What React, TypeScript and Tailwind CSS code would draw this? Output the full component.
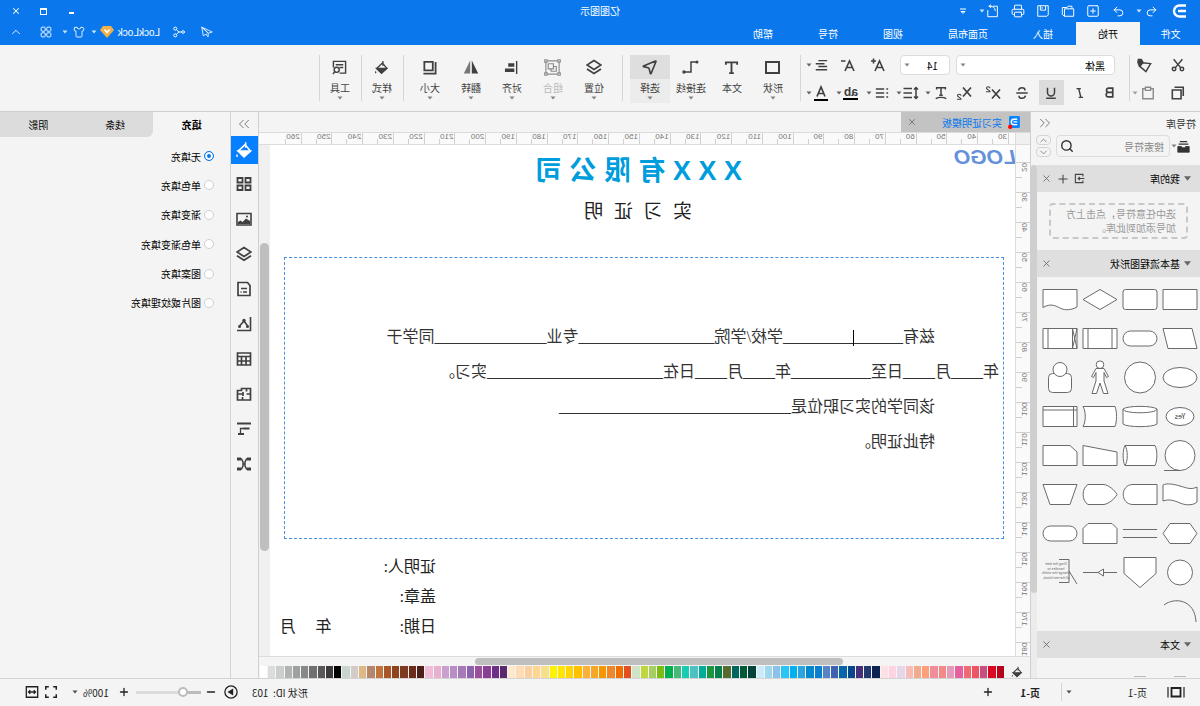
import React from "react";
import {
  ChevronDown,
  ChevronUp,
  ChevronsLeft,
  ChevronsRight,
  Minus,
  MousePointer2,
  Plus,
  Printer,
  Redo2,
  Search,
  Shirt,
  SquarePlus,
  Undo2,
  X,
} from "lucide-react";

type SvgProps = { className?: string; box?: string; width?: number; children: React.ReactNode };

function Svg({ className = "size-4", box = "0 0 16 16", width = 1.5, children }: SvgProps) {
  return (
    <svg className={className} viewBox={box} fill="none" stroke="currentColor" strokeWidth={width} aria-hidden="true">
      {children}
    </svg>
  );
}

function Caret({ className = "" }: { className?: string }) {
  return (
    <svg className={"h-1 w-1.5 shrink-0 opacity-80 " + className} viewBox="0 0 6 4" fill="currentColor" aria-hidden="true">
      <path d="M0.5 0.5h5L3 3.5z" />
    </svg>
  );
}

function Bucket({ className = "size-4" }: { className?: string }) {
  return (
    <Svg className={className} width={1.4}>
      <path d="M6.500 1v5M7 3.200 13.200 9 8 14 2.300 9z" />
      <path d="M2.500 9h10.700L8 14z" fill="currentColor" />
      <path d="M14.200 11.500c1 1.400 1 2.400 0 2.800-1-.4-1-1.400 0-2.800z" fill="currentColor" stroke="none" />
    </Svg>
  );
}

function IconButton({ label, className = "w-4", children }: { label: string; className?: string; children: React.ReactNode }) {
  return (
    <button type="button" aria-label={label} className={"flex shrink-0 items-center justify-center " + className}>
      {children}
    </button>
  );
}

function TitleBar() {
  return (
    <div className="grid h-[22px] grid-cols-[1fr_auto_1fr] items-center">
      <div className="flex h-full items-center pl-2">
        <svg className="h-[14px] w-6" viewBox="0 0 24 14" fill="none" stroke="white" strokeWidth="2.4" aria-hidden="true">
          <path d="M18 1.500" />
          <path d="M6 1.500h6.500a5.500 5.500 0 0 1 0 11H6M6 7h8" />
        </svg>
        <IconButton label="撤销" className="ml-[6px] w-5">
          <Undo2 className="size-[13px]" strokeWidth={1.8} />
        </IconButton>
        <Caret />
        <IconButton label="恢复" className="ml-[5px] w-[25px]">
          <Redo2 className="size-[13px]" strokeWidth={1.8} />
        </IconButton>
        <IconButton label="新建" className="w-[25px]">
          <SquarePlus className="size-[14px]" strokeWidth={1.7} />
        </IconButton>
        <IconButton label="打开" className="w-[25px]">
          <Svg className="size-[14px]" width={1.1}>
            <path d="M1.500 5.500h10.500V14H1.500zM3.500 5.500V2.500h4.500l1 1.500h5.500v8L12 14" />
          </Svg>
        </IconButton>
        <IconButton label="保存" className="w-[25px]">
          <Svg className="size-[14px]" width={1.1}>
            <path d="M2 2h12v12H3.500L2 12.500zM5 2v5h6V2M9 3.500v2" />
          </Svg>
        </IconButton>
        <IconButton label="打印" className="w-[25px]">
          <Printer className="size-[14px]" strokeWidth={1.7} />
        </IconButton>
        <IconButton label="导出" className="w-[25px]">
          <Svg className="size-[14px]" width={1.1}>
            <path d="M8 2.500H3v12h11V7M9.500 2.500H13M5.500 8c0-3.500 2-5.500 6.500-5.500M10.500 1l2 1.500-2 2" />
          </Svg>
        </IconButton>
        <Caret className="-ml-1" />
        <IconButton label="更多" className="ml-[10px] w-3">
          <Svg className="h-[7px] w-2" box="0 0 8 7" width={1}>
            <path d="M1 1h6M2 3.500h4L4 5.500z" />
          </Svg>
        </IconButton>
      </div>
      <h1 className="text-[10px] leading-[22px]">亿图图示</h1>
      <div className="flex justify-end pr-0.5">
        <IconButton label="最小化" className="w-7">
          <span className="mt-1 h-0.5 w-[5px] bg-white" />
        </IconButton>
        <IconButton label="最大化" className="w-7">
          <span className="size-[7px] border border-t-2 border-white" />
        </IconButton>
        <IconButton label="关闭" className="w-7">
          <X className="size-[10px]" strokeWidth={2.5} />
        </IconButton>
      </div>
    </div>
  );
}

function MenuBar() {
  const rest = ["插入", "页面布局", "视图", "符号", "帮助"];
  return (
    <div className="flex h-[23px] justify-between text-[10px]">
      <nav className="flex gap-px">
        <button type="button" className="w-[59px]">文件</button>
        <button type="button" className="bg-[#f4f4f4] px-[22px] text-black">开始</button>
        {rest.map((name) => (
          <button key={name} type="button" className="px-[22px]">{name}</button>
        ))}
      </nav>
      <div className="flex items-center pr-0.5 pb-[3px]">
        <IconButton label="发送">
          <Svg className="size-3" width={1.1}>
            <path d="M15 1.500 1 8l5 1.500zM15 1.500 13 13l-4.500-2.500M15 1.500 6.500 9.500v5L9.500 11" />
          </Svg>
        </IconButton>
        <IconButton label="分享" className="ml-3 w-4">
          <Svg className="size-3" width={1.3}>
            <circle cx="2.500" cy="8" r="1.800" />
            <circle cx="13" cy="3.500" r="2" />
            <circle cx="13" cy="12.500" r="2" />
            <path d="M4.300 8H8l3.300-3M8 8l3.300 3" />
          </Svg>
        </IconButton>
        <button type="button" className="ml-[11px] flex items-center">
          <span className="w-[46px] text-left font-['Liberation_Sans','Noto_Sans_CJK_SC',sans-serif] text-[10px]">LockLock</span>
          <svg className="h-3 w-[14px]" viewBox="0 0 14 12" aria-hidden="true">
            <path d="M3 0h8l3 4-7 8-7-8z" fill="#f3b04a" />
            <path d="M4.500 3.500 7 6.500l2.500-3" fill="none" stroke="white" strokeWidth="1.500" />
          </svg>
          <Caret className="ml-[3px]" />
        </button>
        <IconButton label="主题" className="ml-1 w-4">
          <Shirt className="size-3" strokeWidth={1.7} />
        </IconButton>
        <Caret className="ml-[3px]" />
        <IconButton label="应用" className="ml-1 w-6">
          <Svg className="size-3" width={1.2}>
            <rect x="1.500" y="1.500" width="5.500" height="5.500" rx="1.500" />
            <rect x="9" y="1.500" width="5.500" height="5.500" rx="1.500" />
            <rect x="1.500" y="9" width="5.500" height="5.500" rx="1.500" />
            <rect x="9" y="9" width="5.500" height="5.500" rx="1.500" />
          </Svg>
        </IconButton>
        <IconButton label="收起" className="ml-1 w-7">
          <ChevronUp className="size-[14px]" strokeWidth={1.5} />
        </IconButton>
      </div>
    </div>
  );
}

function Divider({ className = "" }: { className?: string }) {
  return <div className={"h-[46px] w-px shrink-0 bg-[#d6d6d6] " + className} />;
}

function BigTool({ label, active, muted, caret = true, children }: { label: string; active?: boolean; muted?: boolean; caret?: boolean; children: React.ReactNode }) {
  return (
    <button
      type="button"
      disabled={muted}
      className={
        "flex h-12 w-10 shrink-0 flex-col items-center text-[10px] " +
        (active ? "bg-[#ececec] " : "") +
        (muted ? "text-[#b8b8b8]" : "text-[#404040]")
      }
    >
      <span className={"flex h-6 w-full items-center justify-center " + (active ? "bg-[#dedede]" : "")}>{children}</span>
      <span className="h-[17px] leading-[18px]">{label}</span>
      {caret && <Caret className="text-[#666]" />}
    </button>
  );
}

function Ribbon() {
  return (
    <div className="flex h-[67px] items-start border-b border-[#cfcfcf] bg-[#f4f4f4] pt-[10px] text-[#404040]">
      <div className="w-[70px] shrink-0 pl-[14px]">
        <div className="flex h-5 items-center">
          <IconButton label="剪切">
            <Svg className="size-[14px]" width={1.7}>
              <path d="M3 1.500 11 11M13 1.500 5 11" />
              <circle cx="3.500" cy="12.500" r="2" />
              <circle cx="12.500" cy="12.500" r="2" />
            </Svg>
          </IconButton>
          <IconButton label="格式刷" className="ml-[17px] w-4">
            <Svg className="size-[15px]" width={1.6}>
              <path d="M1.500 6 10 5l3 4-6.500 5.500z" />
              <path d="m10 4 3.500 4.500 1.500-4-.5-3h-3z" fill="currentColor" />
            </Svg>
          </IconButton>
        </div>
        <div className="mt-[6px] flex h-6 items-center">
          <IconButton label="复制">
            <Svg className="size-[14px]" width={1.8}>
              <path d="M4.500 4.500h10v10h-10zM2 11.500v-10h10" />
            </Svg>
          </IconButton>
          <IconButton label="粘贴" className="ml-[14px] w-4 text-[#8a8a8a]">
            <Svg className="size-[14px]" width={1.6}>
              <path d="M5 3H2v11.500h12V3h-3M5 1.500h6v3.500H5z" />
            </Svg>
          </IconButton>
          <Caret className="ml-0.5 text-[#888]" />
        </div>
      </div>
      <Divider />
      <div className="w-[328px] shrink-0 pl-[14px]">
        <div className="flex h-5 items-center">
          <div className="relative flex">
            <select aria-label="字体" defaultValue="黑体" className="h-5 w-[159px] appearance-none rounded-sm border border-[#dcdcdc] bg-white pl-[9px] text-[10px] text-black">
              <option>黑体</option>
            </select>
            <Caret className="absolute top-2 right-1 text-[#666]" />
          </div>
          <div className="relative ml-[6px] flex">
            <select aria-label="字号" defaultValue="14" className="h-5 w-[50px] appearance-none rounded-sm border border-[#dcdcdc] bg-white pl-[11px] text-[10px] text-black">
              <option>14</option>
            </select>
            <Caret className="absolute top-2 right-1 text-[#666]" />
          </div>
          <IconButton label="增大字号" className="ml-3 w-5">
            <Svg width={1.6}>
              <path d="M2 14 6.500 4 11 14M3.500 10.500h6M10 4h5M12.500 1.500v5" />
            </Svg>
          </IconButton>
          <IconButton label="减小字号" className="ml-[10px] w-5">
            <Svg width={1.6}>
              <path d="M2 14 6.500 4 11 14M3.500 10.500h6M10.500 4h4.500" />
            </Svg>
          </IconButton>
          <IconButton label="对齐方式" className="ml-[9px] w-4">
            <Svg className="size-[14px]" width={1.7}>
              <path d="M1 3h10M4 6.500h10M1 9.800h10M1 13.300h13" />
            </Svg>
          </IconButton>
          <Caret className="ml-px" />
        </div>
        <div className="mt-[5px] -ml-[7px] flex h-[25px] items-center">
          <div className="flex gap-1">
            <IconButton label="加粗" className="h-[25px] w-[25px]">
              <Svg className="size-[13px]" width={2.1}>
                <path d="M4 2.500h5a2.600 2.600 0 0 1 0 5.300H4zM4 7.800h5.800a2.900 2.900 0 0 1 0 5.700H4z" />
              </Svg>
            </IconButton>
            <IconButton label="斜体" className="h-[25px] w-[25px]">
              <Svg className="size-[14px]" width={1.7}>
                <path d="M7 3h5M9.500 3 7 13M4.500 13h5" />
              </Svg>
            </IconButton>
            <IconButton label="下划线" className="h-[25px] w-[25px] bg-[#dcdcdc]">
              <Svg className="size-[14px]" width={1.7}>
                <path d="M4 2v5.500a4 4 0 0 0 8 0V2M2.500 14h11" />
              </Svg>
            </IconButton>
            <IconButton label="删除线" className="h-[25px] w-[25px]">
              <Svg className="size-[14px]" width={1.7}>
                <path d="M12 5c-.5-2-2-3-4-3S4.500 3.200 4.500 5M4 11c.5 2 2 3 4 3s3.500-1.200 3.500-3M1.500 8h13" />
              </Svg>
            </IconButton>
            <IconButton label="上标" className="h-[25px] w-[25px]">
              <Svg width={1.7}>
                <path d="M1 4.500 9 13.500M9 4.500 1 13.500" />
                <path d="M11 3.200c0-2 3.500-2 3.500 0 0 1.200-3.500 1.800-3.500 3.500h4" strokeWidth="1.100" />
              </Svg>
            </IconButton>
            <IconButton label="下标" className="h-[25px] w-[25px]">
              <Svg width={1.7}>
                <path d="M1 2.500 9 11.500M9 2.500 1 11.500" />
                <path d="M11 10.700c0-2 3.500-2 3.500 0 0 1.200-3.500 1.800-3.500 3.500h4" strokeWidth="1.100" />
              </Svg>
            </IconButton>
          </div>
          <IconButton label="文本变形" className="ml-[3px] w-4">
            <Svg className="size-[14px]" width={1.7}>
              <path d="M3 4V2h10v2M8 2v8.500M6 10.500h4M2 14.500c3-2 9-2 12 0" />
            </Svg>
          </IconButton>
          <Caret className="ml-0.5" />
          <IconButton label="行距" className="ml-[6px] w-4">
            <Svg width={1.5}>
              <path d="M3 2.500v11M1 4.500l2-2 2 2M1 11.500l2 2 2-2M7 3.500h8.500M7 8h8.500M7 12.500h8.500" />
            </Svg>
          </IconButton>
          <Caret className="ml-px" />
          <IconButton label="项目符号" className="ml-[6px] w-4">
            <Svg className="size-[14px]" width={1.6}>
              <path d="M1 3.500h2M1 8h2M1 12.500h2M5.500 3.500H15M5.500 8H15M5.500 12.500H15" />
            </Svg>
          </IconButton>
          <Caret className="ml-0.5" />
          <IconButton label="突出显示" className="ml-[7px] w-4">
            <span className="flex h-[15px] w-[15px] items-center justify-center border-b-2 border-black font-['Liberation_Sans',sans-serif] text-[12px] leading-3 font-bold">ab</span>
          </IconButton>
          <Caret className="ml-px" />
          <IconButton label="字体颜色" className="ml-[7px] w-4">
            <Svg width={1.7}>
              <path d="M4 11.500 8 2l4 9.500M5.200 8.500h5.600" />
              <path d="M1 15h14" stroke="black" strokeWidth="2" />
            </Svg>
          </IconButton>
          <Caret className="ml-px" />
        </div>
      </div>
      <Divider />
      <div className="flex gap-px pl-[7px]">
        <BigTool label="形状">
          <span className="h-[13px] w-[15px] border-2 border-[#404040]" />
        </BigTool>
        <BigTool label="文本" caret={false}>
          <Svg className="size-[15px]" width={2}>
            <path d="M2 5V2.500h12V5M8 2.500V14M5.500 14h5" />
          </Svg>
        </BigTool>
        <BigTool label="连接线">
          <Svg className="h-4 w-[17px]" box="0 0 17 16" width={1.5}>
            <path d="M2.500 3H8v10h6" />
            <circle cx="2" cy="3" r="1.500" fill="currentColor" stroke="none" />
            <circle cx="15" cy="13" r="1.700" fill="currentColor" stroke="none" />
          </Svg>
        </BigTool>
        <BigTool label="选择" active>
          <MousePointer2 className="size-[18px]" strokeWidth={2.2} />
        </BigTool>
      </div>
      <Divider className="mr-[8px] ml-[7px]" />
      <div className="flex gap-px">
        <BigTool label="位置">
          <Svg width={1.6}>
            <path d="M8 1.500 15 6l-7 4.500L1 6zM1 10l7 4.500L15 10" />
          </Svg>
        </BigTool>
        <BigTool label="组合" muted>
          <Svg className="size-[17px] text-[#8a8a8a]" box="0 0 18 18" width={1.2}>
            <path d="M2 2h14v14H2zM8 5h5.500v5.500H8zM8 8H5v5h5.500v-2.500" />
            <path d="M.8.8h2.500v2.500H.8zM14.700.8h2.500v2.500h-2.500zM.8 14.700h2.500v2.500H.8zM14.700 14.700h2.500v2.500h-2.500z" fill="#f4f4f4" />
          </Svg>
        </BigTool>
        <BigTool label="对齐">
          <Svg className="size-[15px]" width={1.5}>
            <path d="M2.500 1v14" />
            <path d="M5 3.500h6.500v3.800H5zM5 9h10v3.800H5z" fill="currentColor" stroke="none" />
          </Svg>
        </BigTool>
        <BigTool label="翻转">
          <Svg width={0}>
            <path d="M7.200 1.500V14.500H.8z" fill="currentColor" />
            <path d="M8.800 1.500V14.500h6.400z" fill="#777" />
          </Svg>
        </BigTool>
        <BigTool label="大小">
          <Svg className="size-[15px]" width={1.9}>
            <path d="M4.500 2h9v9h-9zM1.500 2v12.500h13" />
          </Svg>
        </BigTool>
      </div>
      <Divider className="mr-px ml-[6px]" />
      <BigTool label="样式">
        <Bucket className="size-[15px]" />
      </BigTool>
      <Divider className="mr-px" />
      <BigTool label="工具">
        <Svg className="size-[15px]" width={1.5}>
          <path d="M8 14H1.500V1.500h13V8M4 5h8M4 8h4" />
          <circle cx="11" cy="10.500" r="2.700" />
          <path d="m13 12.500 2 2.500" />
        </Svg>
      </BigTool>
      <Divider />
    </div>
  );
}

const SHAPES: React.ReactNode[] = [
  <path d="M3 9.500h34v20H3z" />,
  <rect x="3" y="9.500" width="34" height="20" rx="2.500" />,
  <path d="M20 9.500 37 19.500l-17 10-17-10z" />,
  <path d="M3 9.500h34v18c-8-5-14-1-18 1s-11 1.500-16-1.500z" />,
  <path d="M8 9.500h29l-5 20H3z" />,
  <rect x="3" y="12" width="34" height="15" rx="7.500" />,
  <path d="M3 9.500h34v20H3zM8 9.500v20M32 9.500v20" />,
  <path d="M3 9.500h34v20H3zM7.500 9.500v20M32 9.500v20M3 9.500l4.500 20M7.500 9.500 3 29.500" />,
  <ellipse cx="20" cy="19.500" rx="17" ry="10" />,
  <circle cx="20" cy="19.500" r="15.500" />,
  <>
    <circle cx="20" cy="6.700" r="3.800" />
    <path d="M16 10.500h8l4.500 8-2 1-2.500-5v8.500l4 12.500h-4.500L20 25l-3.500 10.500H12L16 23v-8.500l-2.500 5-2-1z" />
  </>,
  <>
    <path d="M12.500 15.500h15a4 4 0 0 1 4 4v11a4 4 0 0 1-4 4h-15a4 4 0 0 1-4-4v-11a4 4 0 0 1 4-4z" />
    <circle cx="20" cy="11.500" r="7" />
  </>,
  <>
    <ellipse cx="20" cy="19.500" rx="14" ry="9" />
    <text x="20" y="22" fontSize="7" textAnchor="middle" fill="#333" stroke="none">Yes</text>
  </>,
  <path d="M3 12v15c4 3.500 30 3.500 34 0V12c-4-3.500-30-3.500-34 0zM3 12c0 5 34 5 34 0" />,
  <path d="M37 9.500H5c-2 5-2 15 0 20h32c-3-5-3-15 0-20z" />,
  <path d="M3 9.500h34v20H3zM3 13h34M6.500 9.500v20" />,
  <>
    <circle cx="20" cy="19.500" r="15" />
    <path d="M20 34.500h16" />
  </>,
  <path d="M35 9.500H5c-2.500 5-2.500 15 0 20h30c2.500-4 2.500-16 0-20zM35 9.500c-3 4-3 16 0 20" />,
  <path d="M37 9.500 3 16v13.500h34z" />,
  <path d="M10 9.500h27v20H3V16z" />,
  <path d="M3 12c6 3 10 1 17-1s13-3 17-1v16c-6-2-10-1-17 2s-14 2-17-1z" />,
  <path d="M3 9.500h24c13 0 13 20 0 20H3z" />,
  <path d="M3 19.500c3-5 8-9 13-10h16c6.500 4 6.500 16 0 20H16c-5-1-10-5-13-10z" />,
  <path d="M3 9.500h34l-7 20H10z" />,
  <path d="M3 19.500 10 9.500h20l7 10-7 10H10z" />,
  <path d="M3 15.500h34M3 23.500h34" />,
  <path d="M8 9.500h24l5 5v15H3v-15z" />,
  <rect x="3" y="12" width="34" height="15" rx="7.500" />,
  <circle cx="20" cy="19.500" r="12.500" />,
  <path d="M4 4.500h32v16l-16 14-16-14z" />,
  <>
    <path d="M3 19.500h34" />
    <path d="M22 19.500 16.500 16v7z" />
  </>,
  <>
    <path d="M21 6.500H11v23h10M11 18 3 31" fill="none" />
    <g fontSize="3.500" textAnchor="middle" fill="#666" stroke="none">
      <text x="24" y="12">Drag the side</text>
      <text x="24" y="16.500">handles to</text>
      <text x="24" y="21">change the width</text>
      <text x="24" y="25.500">of the text block.</text>
    </g>
  </>,
  <path d="M36 13C26 5 5 7 4 30" fill="none" />,
];

function SectionHeader({ name, tools }: { name: string; tools?: boolean }) {
  return (
    <div className="flex h-[27px] shrink-0 items-center bg-[#dfdfdf] pr-0.5 pl-[9px] text-black">
      <svg className="h-[5px] w-[7px] text-[#666]" viewBox="0 0 8 5" fill="currentColor" aria-hidden="true">
        <path d="M0 0h8L4 5z" />
      </svg>
      <h3 className="ml-1 flex-1 text-[10px]">{name}</h3>
      {tools && (
        <>
          <IconButton label="导入">
            <Svg className="size-[11px] text-[#444]" width={1.6}>
              <path d="M3 5V2h11v12H3v-3M1 8h9M7.500 5.500 10 8l-2.500 2.500" />
            </Svg>
          </IconButton>
          <IconButton label="添加" className="w-[17px]">
            <Plus className="size-[14px] text-[#444]" strokeWidth={1.8} />
          </IconButton>
        </>
      )}
      <IconButton label="关闭">
        <X className="size-[11px] text-[#666]" strokeWidth={1.8} />
      </IconButton>
    </div>
  );
}

function SymbolPanel() {
  return (
    <aside className="flex w-[170px] shrink-0 flex-col overflow-hidden border-r border-[#cfcfcf]">
      <div className="flex h-[22px] shrink-0 items-center justify-between pr-[5px] pl-1">
        <h2 className="text-[10px]">符号库</h2>
        <button type="button" aria-label="收起符号库">
          <ChevronsLeft className="size-[18px] text-[#777]" strokeWidth={1.3} />
        </button>
      </div>
      <div className="flex h-[31px] shrink-0 items-center pb-[7px] pl-[9px]">
        <IconButton label="符号分类" className="w-[14px]">
          <Svg className="size-[13px]" width={1.6}>
            <path d="M3.500 2h9M2 5h12" />
            <path d="M1 8h4.500v1.500h5V8H15v7H1z" fill="currentColor" strokeWidth="1" />
          </Svg>
        </IconButton>
        <Caret className="text-[#666]" />
        <div className="relative ml-px flex">
          <input aria-label="搜索符号" placeholder="搜索符号" className="h-[22px] w-[114px] rounded-sm border border-[#dcdcdc] bg-transparent pl-[5px] text-[10px] placeholder:text-[#888]" />
          <Search className="absolute top-1 right-1 size-[14px] -rotate-270 text-[#333]" strokeWidth={2.4} />
        </div>
        <div className="ml-[5px] flex flex-col gap-[2px]">
          <button type="button" aria-label="上一个" className="flex h-[10px] w-[15px] items-center justify-center rounded-sm border border-[#d4d4d4]">
            <ChevronUp className="size-[11px] text-[#777]" strokeWidth={1.8} />
          </button>
          <button type="button" aria-label="下一个" className="flex h-[10px] w-[15px] items-center justify-center rounded-sm border border-[#d4d4d4]">
            <ChevronDown className="size-[11px] text-[#777]" strokeWidth={1.8} />
          </button>
        </div>
      </div>
      <div className="flex min-h-0 flex-1">
        <div className="flex flex-1 flex-col overflow-hidden">
          <SectionHeader name="我的库" tools />
          <div className="shrink-0 px-3 py-[11px]">
            <p className="rounded-sm border-2 border-dashed border-[#c8c8c8] px-[10px] py-0.5 text-[10px] leading-[14px] text-[#999]">
              选中任意符号，点击上方
              <br />
              加号添加到此库。
            </p>
          </div>
          <SectionHeader name="基本流程图形状" />
          <div className="mt-[3px] grid w-40 shrink-0 grid-cols-4">
            {SHAPES.map((shape, i) => (
              <svg key={i} className="h-[39px] w-10" viewBox="0 0 40 39" fill="white" stroke="#6a6a6a" strokeWidth="1" aria-hidden="true">
                {shape}
              </svg>
            ))}
          </div>
          <SectionHeader name="文本" />
          <div className="flex shrink-0 gap-7 pt-[18px] pl-[14px]">
            <span className="h-px w-3 bg-[#bbb]" />
            <span className="h-px w-3 bg-[#bbb]" />
          </div>
        </div>
        <div className="w-[6px] bg-[#ececec]">
          <div className="h-[428px] rounded-full bg-[#cfcfcf]" />
        </div>
      </div>
    </aside>
  );
}

const TOP_MARKS = Array.from({ length: 24 }, (_, i) => 30 + i * 10);
const SIDE_MARKS = Array.from({ length: 17 }, (_, i) => 20 + i * 10);

function TopRuler() {
  return (
    <div className="flex h-[13px] shrink-0 border-y border-[#dcdcdc] bg-[#fafafa] pr-3 font-['Liberation_Sans',sans-serif] text-[8px] leading-[8px] text-[#777]">
      <div className="w-[15px] border-r border-[#dcdcdc] bg-[#f0f0f0]" />
      <div className="flex flex-1 pl-[6px]">
        {TOP_MARKS.map((n) => (
          <div key={n} className="flex flex-1 items-end border-l border-[#d0d0d0]">
            <span className="flex-1 self-start pl-px">{n}</span>
            <span className="h-[5px] flex-1 border-l border-[#d0d0d0]" />
          </div>
        ))}
      </div>
    </div>
  );
}

function SideRuler() {
  return (
    <div className="w-[15px] shrink-0 overflow-hidden border-r border-[#dcdcdc] bg-[#fafafa] pt-[17px] font-['Liberation_Sans',sans-serif] text-[8px] leading-[8px] text-[#777]">
      {SIDE_MARKS.map((n) => (
        <div key={n} className="flex h-[30px] flex-col border-t border-[#d0d0d0]">
          <span className="flex h-[14px] rotate-180 items-end justify-end pl-1 [writing-mode:vertical-rl]">{n}</span>
          <span className="w-[6px] self-end border-t border-[#d0d0d0]" />
        </div>
      ))}
    </div>
  );
}

const blank = (n: number) => "_".repeat(n);

function Page() {
  return (
    <main className="relative flex-1 overflow-hidden bg-white font-['Liberation_Serif','Noto_Sans_CJK_SC',sans-serif] text-[#333]">
      <div className="absolute top-0.5 -left-px font-['Liberation_Sans',sans-serif] text-[21px] leading-5 font-bold text-[#6490dc] italic">LOGO</div>
      <div className="absolute top-2 left-[273px] font-['Liberation_Sans','Noto_Sans_CJK_SC',sans-serif] text-[27px] leading-9 font-bold whitespace-nowrap text-[#009ddc]">
        X X X 有 限 公 司
      </div>
      <div className="absolute top-[51px] left-[323px] font-['Liberation_Sans','Noto_Sans_CJK_SC',sans-serif] text-[19px] leading-[31px] whitespace-pre text-[#222]">
        {"实  习  证  明"}
      </div>
      <div className="absolute top-[112px] left-[11px] h-[282px] w-[720px] border border-dashed border-[#4a90e2] pt-[61px] pl-1 text-[16px] leading-[35px] whitespace-nowrap">
        <p className="pl-16">
          兹有{blank(6)}
          <span className="relative">
            <span className="absolute top-0.5 left-px h-4 w-px bg-black" />
          </span>
          {blank(9)}学校/学院{blank(17)}专业{blank(14)}同学于
        </p>
        <p>
          年{blank(4)}月{blank(4)}日至{blank(10)}年{blank(4)}月{blank(4)}日在{blank(22)}实习。
        </p>
        <p className="pl-16">该同学的实习职位是{blank(29)}</p>
        <p className="pl-16">特此证明。</p>
      </div>
      <div className="absolute top-[407px] left-[579px] text-[16px] leading-[30px] whitespace-pre text-[#222]">
        <p>证明人:</p>
        <p>盖章:</p>
        <p>{"日期:" + " ".repeat(17) + "年" + " ".repeat(5) + "月"}</p>
      </div>
    </main>
  );
}

const PALETTE = [
  "#b5041c", "#d90a26", "#c94f7c", "#ed5464", "#ef6a72", "#e65f9e", "#e39bb9", "#f28b86", "#f08d9d", "#ffa07a", "#f2a98e", "#f7bcb6", "#e9d5e8", "#ffd2e4", "#ffe0e4",
  "#0b2350", "#223a70", "#46307c", "#07468d", "#0465a9", "#4060b0", "#5584c4", "#0880d0", "#0288cf", "#2aa5e0", "#00b0f0", "#2bc4f7", "#8bc2ea", "#9dd8ee", "#cdeaf7",
  "#00443a", "#005a33", "#00665f", "#566b2e", "#04804a", "#1f9440", "#00ad99", "#50bfc0", "#18cdaf", "#46b97a", "#00b050", "#7dbb12", "#a5cf62", "#c0d63c", "#cde5c5",
  "#e2501f", "#f06d00", "#f0862a", "#f39800", "#f5a623", "#fbb03b", "#ffc000", "#ffd400", "#ffe600", "#fff200", "#f7e08a", "#ffd591", "#fbd0a0", "#fddcb5", "#ffe8cc",
  "#5a2a6e", "#6d2f86", "#8a3f94", "#9b4f9c", "#8d64aa", "#a77bb9", "#b98cc4", "#c9a0d0", "#e8b0d0", "#f0bcd8", "#4d1f1a", "#6b2c1c", "#7f3a22", "#8f4420", "#a8552a",
  "#c0763a", "#b5866b", "#deb887", "#d3cbc7", "#c9d4cc", "#000000", "#413a3a", "#5a5858", "#707070", "#888888", "#9da1a0", "#b0b4b3", "#cacecd", "#dcdcdc", "#ffffff",
];

function Editor() {
  return (
    <section className="flex min-w-0 flex-1 flex-col border-r border-[#cfcfcf]">
      <div className="flex h-5 shrink-0">
        <div className="flex w-[129px] items-center bg-[#c3c3c3] pl-[9px] text-[10px] text-[#0a78ec]">
          <svg className="size-[13px]" viewBox="0 0 12 12" aria-hidden="true">
            <rect x="1" y="0" width="10" height="11" rx="1" fill="#0a84ff" />
            <path d="M3.500 3h3a2.500 2.500 0 0 1 0 5h-3M3.500 5.500H7" fill="none" stroke="white" strokeWidth="1.200" />
            <circle cx="10" cy="10" r="2" fill="#f00" />
          </svg>
          <span className="ml-[6px] flex-1 whitespace-nowrap">实习证明模板</span>
          <IconButton label="关闭文档" className="mr-[3px] w-4">
            <X className="size-[10px] text-[#666]" strokeWidth={2} />
          </IconButton>
        </div>
      </div>
      <TopRuler />
      <div className="flex min-h-0 flex-1">
        <SideRuler />
        <Page />
        <div className="w-[11px] shrink-0 bg-[#f0f0f0] px-px pt-[98px]">
          <div className="h-[308px] rounded-full bg-[#bfbfbf]" />
        </div>
      </div>
      <div className="h-[10px] shrink-0 border-t border-[#dcdcdc] px-[11px] pt-px">
        <div className="ml-[176px] h-[7px] w-[368px] rounded-full bg-[#bfbfbf]" />
      </div>
      <div className="flex h-3 shrink-0 items-center">
        <IconButton label="填充颜色" className="w-[26px]">
          <Bucket className="size-3 text-[#404040]" />
        </IconButton>
        <div className="flex h-full flex-1 gap-px">
          {PALETTE.map((color, i) => (
            <button key={i} type="button" aria-label={color} className="flex-1" style={{ backgroundColor: color }} />
          ))}
        </div>
      </div>
    </section>
  );
}

function SideTools() {
  const tools: [string, React.ReactNode][] = [
    ["布局", <Svg width={1.8}><path d="M1.500 2h5v4.500h-5zM9.500 2h5v4.500h-5zM1.500 9.500h5V14h-5zM9.500 9.500h5V14h-5z" /></Svg>],
    ["图片", <Svg width={1.6}><path d="M1 2.500h14v11.500H1z" /><path d="M2 13v-3l4-2.500L9.500 11l2-1.500L14 11v2z" fill="currentColor" stroke="none" /><circle cx="5" cy="5.500" r="1" fill="currentColor" stroke="none" /></Svg>],
    ["图层", <Svg width={1.7}><path d="M8 1.500 15 6l-7 4.500L1 6zM1 9.800l7 4.500 7-4.500" /></Svg>],
    ["备注", <Svg width={1.7}><path d="M4.500 1.500H14v13H2V4.500zM5 7.500h6M5 11h4M10.500 11h1" /></Svg>],
    ["图表", <Svg width={1.6}><path d="M1.500 1v13.500H15M4 10.500 8 5l4.500 5" /><circle cx="4.500" cy="10.500" r="1.500" fill="currentColor" stroke="none" /><circle cx="8" cy="4.500" r="1.700" fill="currentColor" stroke="none" /><circle cx="12.500" cy="10.500" r="1.500" fill="currentColor" stroke="none" /></Svg>],
    ["表格", <Svg width={1.7}><path d="M1.500 2h13v12h-13zM1.500 5.500h13M1.500 10h13M6 5.500V14M10.500 5.500V14" /></Svg>],
    ["组件", <Svg width={1.7}><path d="M1.500 2.500h9v2h4v9.500h-13zM1.500 8h4M5.500 2.500v3M9.500 14v-3M9 8h5M9 6v4" /></Svg>],
    ["甘特图", <Svg width={2.2}><path d="M1 2.500h14M2.500 7.500h6M8 13h6" /><path d="M8 7.500h3.500V13" strokeWidth="1.300" /></Svg>],
    ["思维导图", <Svg width={1.5}><path d="M3 3h2.500l1.500 3v4l-1.500 3H3M13 3h-2.500L9 6v4l1.500 3H13M7 8h2" /><path d="M1 3h4M1 13h4M11 3h4M11 13h4" strokeWidth="3" /></Svg>],
  ];
  return (
    <div className="flex w-7 shrink-0 flex-col items-center border-r border-[#d4d4d4] text-[#404040]">
      <button type="button" aria-label="收起面板" className="flex h-6 items-center">
        <ChevronsRight className="size-[18px] text-[#777]" strokeWidth={1.3} />
      </button>
      <button type="button" aria-label="填充" className="flex h-7 w-full items-center justify-center bg-[#0680ff] text-white">
        <Bucket className="size-[18px]" />
      </button>
      <div className="mt-0.5 flex flex-col">
        {tools.map(([name, icon]) => (
          <IconButton key={name} label={name} className="h-[35px] w-7">{icon}</IconButton>
        ))}
      </div>
    </div>
  );
}

function FillPanel() {
  const options = ["无填充", "单色填充", "渐变填充", "单色渐变填充", "图案填充", "图片或纹理填充"];
  return (
    <aside className="w-[230px] shrink-0 text-[10px] text-black">
      <div className="grid h-[25px] grid-cols-3">
        <button type="button" className="font-bold">填充</button>
        <button type="button" className="rounded-bl-md bg-[#dcdcdc]">线条</button>
        <button type="button" className="bg-[#dcdcdc]">阴影</button>
      </div>
      <div className="mt-[11px] ml-4 flex h-[163px] flex-col justify-between">
        {options.map((name, i) => (
          <label key={name} className="flex h-4 items-center gap-[3px]">
            <input
              type="radio"
              name="fill"
              defaultChecked={i === 0}
              className="size-[10px] appearance-none rounded-full border border-[#cfcfcf] bg-white checked:border-[#0a78ec] checked:bg-[#0a78ec] checked:shadow-[inset_0_0_0_2px_white]"
            />
            {name}
          </label>
        ))}
      </div>
    </aside>
  );
}

function StatusBar() {
  return (
    <footer className="flex h-7 shrink-0 items-center border-t border-[#d4d4d4] pr-6 pb-px pl-[15px] text-[10px] text-[#222]">
      <IconButton label="页面列表" className="w-[18px]">
        <Svg className="h-3 w-[18px]" box="0 0 18 12" width={1.8}>
          <path d="M4.500 2h9v8.500h-9z" />
          <path d="M1 1v10.500M17 1v10.500" strokeWidth="1.200" />
        </Svg>
      </IconButton>
      <button type="button" className="ml-5 flex w-[81px] items-center justify-between">
        页-1
        <Caret />
      </button>
      <div className="ml-1 h-[18px] w-px bg-[#d4d4d4]" />
      <button type="button" className="ml-[21px] font-bold">页-1</button>
      <IconButton label="添加页" className="ml-6 w-4">
        <Plus className="size-3" strokeWidth={2.6} />
      </IconButton>
      <span className="ml-auto whitespace-pre">{"形状 ID:  103"}</span>
      <IconButton label="播放" className="ml-[13px] w-4">
        <Svg className="size-[14px]" width={1.5}>
          <circle cx="8" cy="8" r="7" />
          <path d="M5.500 4v8L12 8z" fill="currentColor" stroke="none" />
        </Svg>
      </IconButton>
      <IconButton label="缩小" className="ml-1 w-4">
        <Minus className="size-3" strokeWidth={2.6} />
      </IconButton>
      <input
        type="range"
        aria-label="缩放"
        defaultValue={24}
        className="mx-0.5 h-[10px] w-[65px] appearance-none bg-[linear-gradient(to_right,#bcbcbc_26%,#dcdcdc_26%)] bg-[length:100%_3px] bg-center bg-no-repeat [&::-webkit-slider-thumb]:size-[10px] [&::-webkit-slider-thumb]:appearance-none [&::-webkit-slider-thumb]:rounded-full [&::-webkit-slider-thumb]:border-2 [&::-webkit-slider-thumb]:border-[#bcbcbc] [&::-webkit-slider-thumb]:bg-white"
      />
      <IconButton label="放大" className="ml-0.5 w-4">
        <Plus className="size-3" strokeWidth={2.6} />
      </IconButton>
      <button type="button" className="ml-[7px] flex items-center gap-[5px]">
        100%
        <Caret />
      </button>
      <IconButton label="全屏" className="ml-[13px] w-4">
        <Svg className="size-[14px]" width={1.7}>
          <path d="M2 5.500V2h3.500M10.500 2H14v3.500M14 10.500V14h-3.500M5.500 14H2v-3.500" />
        </Svg>
      </IconButton>
      <IconButton label="适合宽度" className="ml-[3px] w-4">
        <Svg className="size-[14px]" width={1.5}>
          <path d="M1.500 2h13v12h-13zM4 8h8M6 6 4 8l2 2M10 6l2 2-2 2" />
        </Svg>
      </IconButton>
    </footer>
  );
}

export default function App() {
  return (
    <div className="flex h-screen w-full -scale-x-100 flex-col overflow-hidden bg-[#f4f4f4] font-['Noto_Sans_CJK_SC',sans-serif] text-[#333]">
      <header className="shrink-0 bg-[#0a78ec] text-white">
        <TitleBar />
        <MenuBar />
      </header>
      <Ribbon />
      <div className="flex min-h-0 flex-1">
        <SymbolPanel />
        <Editor />
        <SideTools />
        <FillPanel />
      </div>
      <StatusBar />
    </div>
  );
}
